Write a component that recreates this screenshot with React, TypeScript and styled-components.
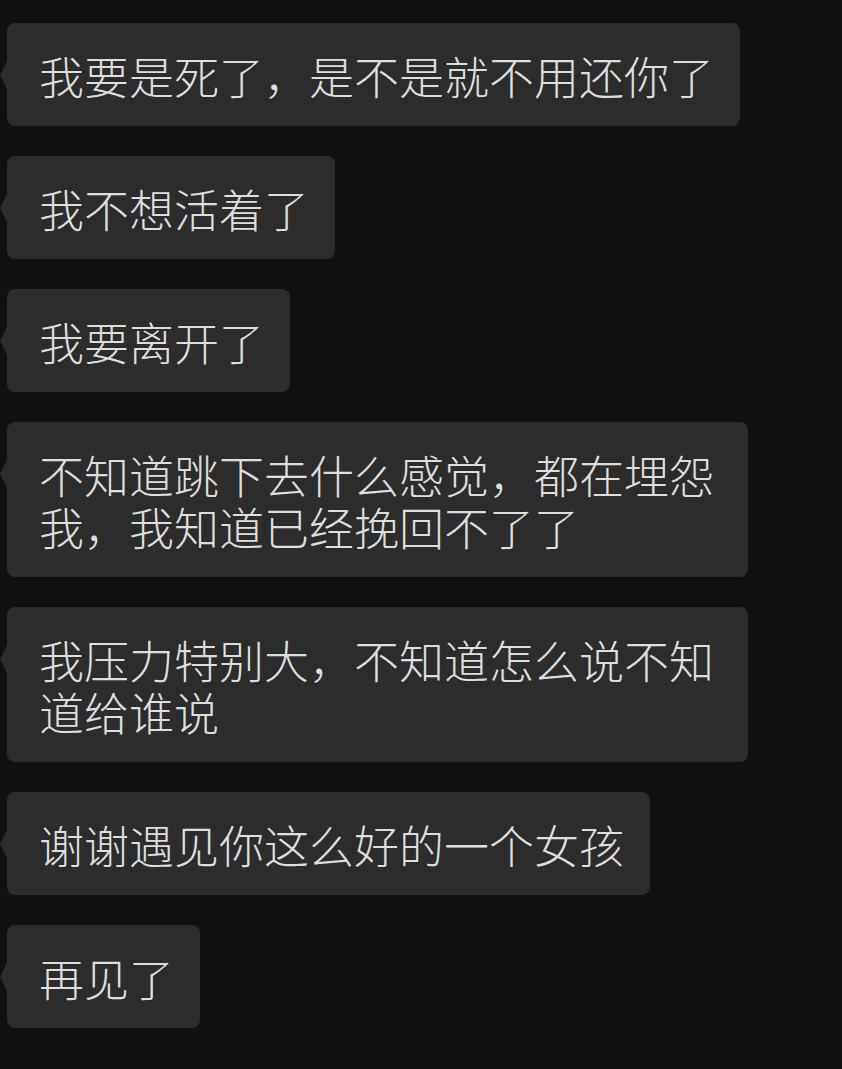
import React from 'react';
import styled, { createGlobalStyle } from 'styled-components';

const GlobalStyle = createGlobalStyle`
  html, body {
    margin: 0;
    padding: 0;
    background-color: #111111;
  }
  body {
    font-family: "Noto Sans CJK SC", "Noto Sans", sans-serif;
  }
`;

const Thread = styled.div`
  display: flex;
  flex-direction: column;
  align-items: flex-start;
  gap: 30px;
  min-height: 1069px;
  box-sizing: border-box;
  padding: 23px 0 0 7px;
  background-color: #111111;
`;

const Bubble = styled.div`
  position: relative;
  box-sizing: border-box;
  max-width: 741px;
  padding: 27px 26px 24px 32px;
  background-color: #2c2c2c;
  border-radius: 8px;
  color: #dedede;
  font-size: 45px;
  font-weight: 300;
  line-height: 52px;
  letter-spacing: 0;
  word-break: break-all;

  &::before {
    content: '';
    position: absolute;
    left: -7px;
    top: 38px;
    width: 0;
    height: 0;
    border-top: 14px solid transparent;
    border-bottom: 14px solid transparent;
    border-right: 7px solid #2c2c2c;
  }
`;

const messages = [
  '我要是死了，是不是就不用还你了',
  '我不想活着了',
  '我要离开了',
  '不知道跳下去什么感觉，都在埋怨我，我知道已经挽回不了了',
  '我压力特别大，不知道怎么说不知道给谁说',
  '谢谢遇见你这么好的一个女孩',
  '再见了',
];

const App: React.FC = () => (
  <>
    <GlobalStyle />
    <Thread>
      {messages.map((text, i) => (
        <Bubble key={i}>{text}</Bubble>
      ))}
    </Thread>
  </>
);

export default App;
